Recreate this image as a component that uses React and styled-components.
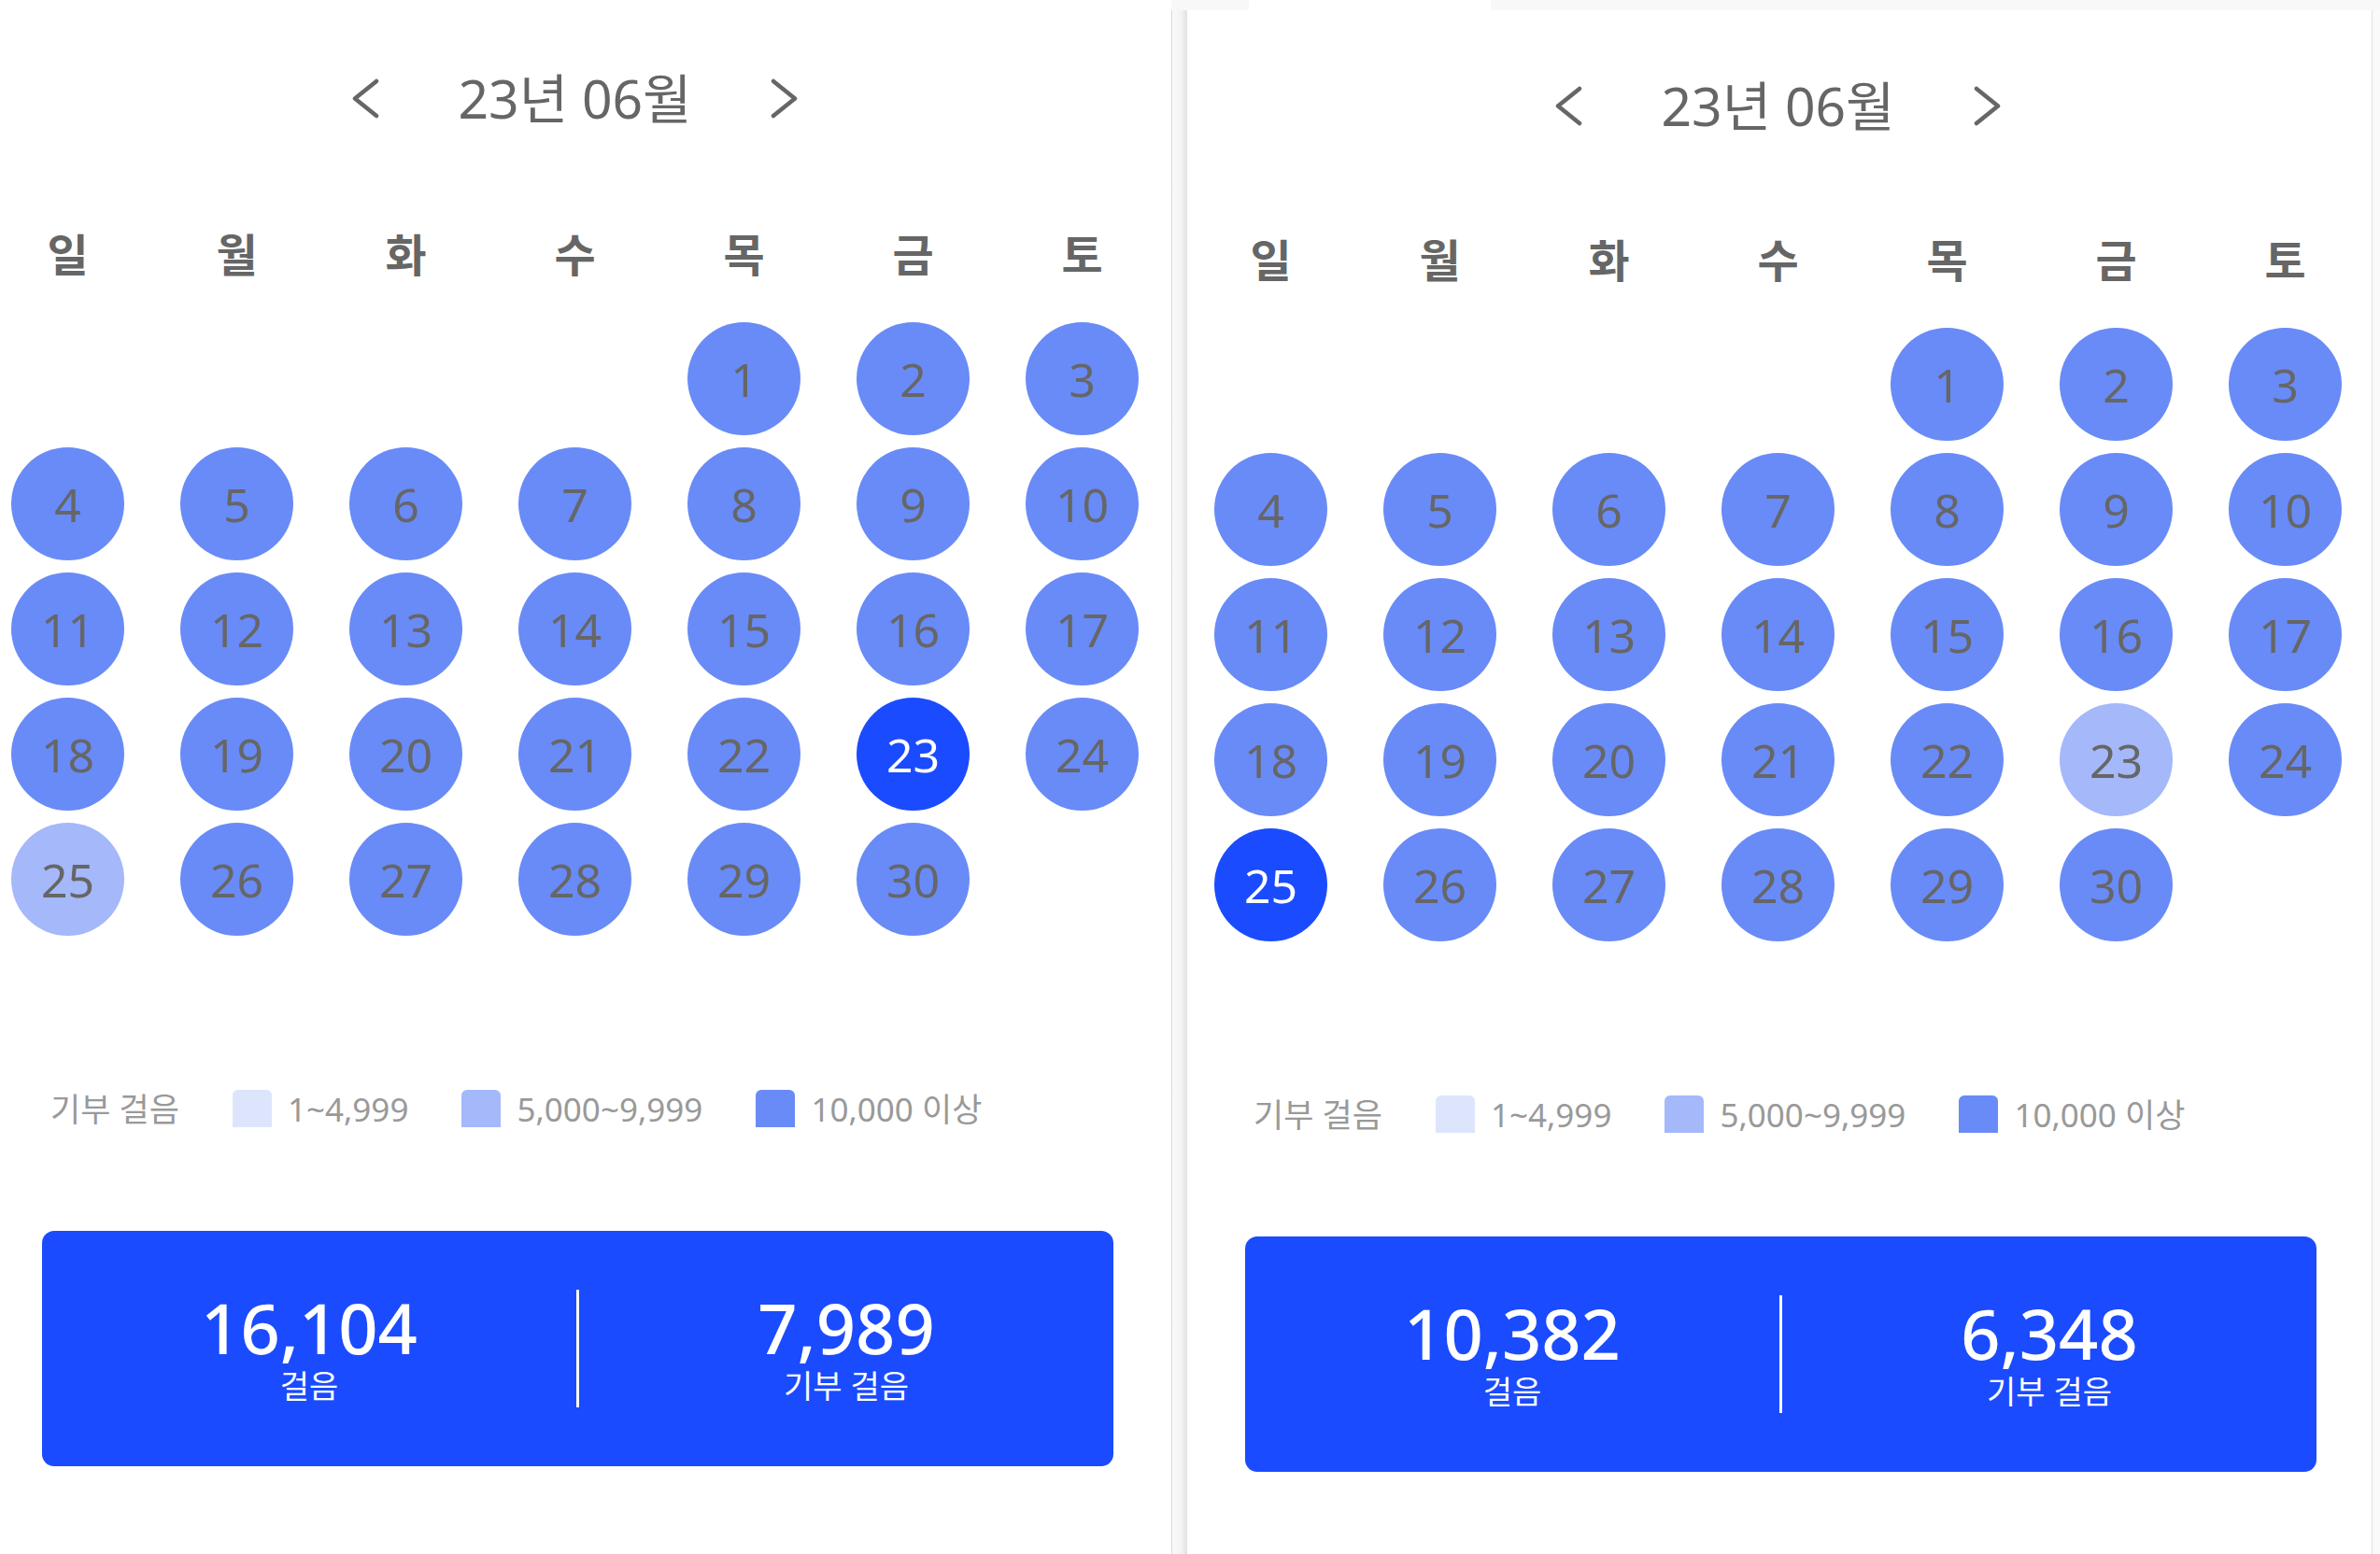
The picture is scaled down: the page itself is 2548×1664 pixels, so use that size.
import React from 'react';
import styled, { createGlobalStyle } from 'styled-components';

const GlobalStyle = createGlobalStyle`
  html, body {
    margin: 0;
    padding: 0;
    background: #fff;
  }
  body {
    font-family: "Noto Sans", "Noto Sans CJK KR", sans-serif;
  }
`;

const levelColors = {
  low: '#dde5fd',
  mid: '#a4b8fa',
  high: '#698bf7',
  selected: '#1a4bff',
};

const Page = styled.div`
  display: flex;
  width: 2548px;
  height: 1664px;
  overflow: hidden;
  background: #fff;
`;

const LeftSide = styled.div`
  width: 1254px;
  flex-shrink: 0;
  display: flex;
`;

const RightSide = styled.div`
  flex: 1;
  display: flex;
  flex-direction: column;
`;

const TopStrip = styled.div`
  height: 11px;
  display: flex;
  background: #f8f8f8;
`;

const StripTab = styled.div`
  margin-left: 83px;
  width: 259px;
  background: #fff;
`;

const RightBody = styled.div`
  flex: 1;
  display: flex;
`;

const Seam = styled.div`
  width: 16px;
  border-left: 1px solid #d8d8d8;
  background: linear-gradient(to right, #fafafa, #f3f3f3 60%, #e0e0e0);
`;

const EdgeStrip = styled.div`
  width: 8px;
  border-left: 1px solid #e4e4e4;
  background: #fafafa;
`;

const Panel = styled.div`
  flex: 1;
  padding-left: ${p => p.$padLeft}px;
  background: #fff;
`;

const Column = styled.div`
  width: 1207px;
  display: flex;
  flex-direction: column;
`;

const Header = styled.div`
  height: ${p => p.$h}px;
  display: flex;
  align-items: center;
  justify-content: center;
  gap: 84px;
  color: #666;
`;

const MonthTitle = styled.div`
  font-size: 57px;
  font-weight: 400;
  line-height: 1;
`;

const ArrowButton = styled.button`
  border: 0;
  background: none;
  padding: 0;
  display: flex;
  color: #666;
  cursor: pointer;
`;

const WeekRow = styled.div`
  display: grid;
  grid-template-columns: repeat(7, 121px);
  column-gap: 60px;
  margin-top: 33px;
  margin-bottom: 2px;
  height: 60px;
  align-items: center;
`;

const WeekDay = styled.div`
  text-align: center;
  font-size: 48px;
  font-weight: 700;
  color: #666;
  line-height: 60px;
`;

const DayGrid = styled.div`
  display: grid;
  grid-template-columns: repeat(7, 121px);
  column-gap: 60px;
  row-gap: 13px;
  margin-top: 40px;
`;

const DayCircle = styled.div`
  grid-column-start: ${p => p.$start || 'auto'};
  width: 121px;
  height: 121px;
  border-radius: 50%;
  background: ${p => levelColors[p.$level]};
  color: ${p => (p.$level === 'selected' ? '#fff' : '#666')};
  display: flex;
  align-items: center;
  justify-content: center;
  font-size: 50px;
  line-height: 1;
`;

const Legend = styled.div`
  margin-top: 165px;
  height: 40px;
  padding-left: 42px;
  display: flex;
  align-items: center;
  gap: 57px;
  color: #999;
  font-size: 35px;
  line-height: 1;
`;

const LegendItem = styled.div`
  display: flex;
  align-items: center;
  gap: 17px;
`;

const Swatch = styled.span`
  width: 42px;
  height: 40px;
  border-radius: 6px 6px 0 0;
  background: ${p => levelColors[p.$level]};
`;

const SummaryCard = styled.div`
  margin: 111px 27px 0 33px;
  height: 252px;
  border-radius: 13px;
  background: #1a4bff;
  display: flex;
  align-items: center;
  color: #fff;
`;

const Stat = styled.div`
  flex: 1;
  display: flex;
  flex-direction: column;
  align-items: center;
`;

const StatValue = styled.div`
  font-size: 74px;
  font-weight: 500;
  line-height: 1;
`;

const StatLabel = styled.div`
  font-size: 34px;
  line-height: 1.1;
  margin-top: 7px;
`;

const CardDivider = styled.div`
  width: 3px;
  height: 126px;
  background: #fff;
`;

const Chevron = ({ dir }) => (
  <svg width="30" height="43" viewBox="0 0 30 43" fill="none">
    <polyline
      points={dir === 'left' ? '27,3 4,21.5 27,40' : '3,3 26,21.5 3,40'}
      stroke="currentColor"
      strokeWidth="4.5"
      strokeLinecap="round"
      strokeLinejoin="round"
    />
  </svg>
);

const WEEK = ['일', '월', '화', '수', '목', '금', '토'];

function fmt(n) {
  return n.toLocaleString('en-US');
}

function Calendar({ padLeft, headerHeight, selected, light, steps, donated }) {
  const days = Array.from({ length: 30 }, (_, i) => i + 1);
  return (
    <Panel $padLeft={padLeft}>
      <Column>
        <Header $h={headerHeight}>
          <ArrowButton aria-label="이전 달">
            <Chevron dir="left" />
          </ArrowButton>
          <MonthTitle>23년 06월</MonthTitle>
          <ArrowButton aria-label="다음 달">
            <Chevron dir="right" />
          </ArrowButton>
        </Header>

        <WeekRow>
          {WEEK.map(w => (
            <WeekDay key={w}>{w}</WeekDay>
          ))}
        </WeekRow>

        <DayGrid>
          {days.map(d => {
            let level = 'high';
            if (d === selected) level = 'selected';
            else if (d === light) level = 'mid';
            return (
              <DayCircle key={d} $level={level} $start={d === 1 ? 5 : null}>
                {d}
              </DayCircle>
            );
          })}
        </DayGrid>

        <Legend>
          <span>기부 걸음</span>
          <LegendItem>
            <Swatch $level="low" />
            1~4,999
          </LegendItem>
          <LegendItem>
            <Swatch $level="mid" />
            5,000~9,999
          </LegendItem>
          <LegendItem>
            <Swatch $level="high" />
            10,000 이상
          </LegendItem>
        </Legend>

        <SummaryCard>
          <Stat>
            <StatValue>{fmt(steps)}</StatValue>
            <StatLabel>걸음</StatLabel>
          </Stat>
          <CardDivider />
          <Stat>
            <StatValue>{fmt(donated)}</StatValue>
            <StatLabel>기부 걸음</StatLabel>
          </Stat>
        </SummaryCard>
      </Column>
    </Panel>
  );
}

export default function App() {
  return (
    <>
      <GlobalStyle />
      <Page>
        <LeftSide>
          <Calendar padLeft={12} headerHeight={210} selected={23} light={25} steps={16104} donated={7989} />
        </LeftSide>
        <RightSide>
          <TopStrip>
            <StripTab />
          </TopStrip>
          <RightBody>
            <Seam />
            <Calendar padLeft={29} headerHeight={205} selected={25} light={23} steps={10382} donated={6348} />
            <EdgeStrip />
          </RightBody>
        </RightSide>
      </Page>
    </>
  );
}
